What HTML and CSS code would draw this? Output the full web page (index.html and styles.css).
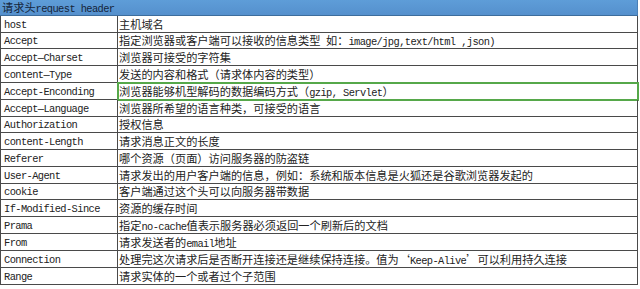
FILE: index.html
```html
<!DOCTYPE html>
<html lang="zh-CN">
<head>
<meta charset="utf-8">
<title>请求头request header</title>
<link rel="stylesheet" href="styles.css">
</head>
<body>
<div class="sheet">
  <div class="head">请求头<span class="en">request header</span></div>
  <div class="row"><div class="k">host</div><div class="v">主机域名</div></div>
  <div class="row s"><div class="k">Accept</div><div class="v">指定浏览器或客户端可以接收的信息类型<span class="en"> </span>如：<span class="en">image/jpg,text/html ,json)</span></div></div>
  <div class="row"><div class="k">Accept—Charset</div><div class="v">浏览器可接受的字符集</div></div>
  <div class="row"><div class="k">content—Type</div><div class="v">发送的内容和格式（请求体内容的类型）</div></div>
  <div class="row"><div class="k">Accept-Enconding</div><div class="v hl">浏览器能够机型解码的数据编码方式（<span class="en">gzip, Servlet</span>）</div></div>
  <div class="row"><div class="k">Accept—Language</div><div class="v">浏览器所希望的语言种类，可接受的语言</div></div>
  <div class="row s"><div class="k">Authorization</div><div class="v">授权信息</div></div>
  <div class="row"><div class="k">content-Length</div><div class="v">请求消息正文的长度</div></div>
  <div class="row"><div class="k">Referer</div><div class="v">哪个资源（页面）访问服务器的防盗链</div></div>
  <div class="row"><div class="k">User-Agent</div><div class="v">请求发出的用户客户端的信息，例如：系统和版本信息是火狐还是谷歌浏览器发起的</div></div>
  <div class="row s"><div class="k">cookie</div><div class="v">客户端通过这个头可以向服务器带数据</div></div>
  <div class="row"><div class="k">If-Modified-Since</div><div class="v">资源的缓存时间</div></div>
  <div class="row"><div class="k">Prama</div><div class="v">指定<span class="en">no-cache</span>值表示服务器必须返回一个刷新后的文档</div></div>
  <div class="row"><div class="k">From</div><div class="v">请求发送者的<span class="en">email</span>地址</div></div>
  <div class="row"><div class="k">Connection</div><div class="v">处理完这次请求后是否断开连接还是继续保持连接。值为‘<span class="en">Keep-Alive</span>’可以利用持久连接</div></div>
  <div class="row"><div class="k">Range</div><div class="v">请求实体的一个或者过个子范围</div></div>
</div>
</body>
</html>
```

FILE: styles.css
```css
html, body {
  margin: 0;
  padding: 0;
  background: #ffffff;
}

.sheet {
  width: 638px;
  font-family: "Noto Sans CJK SC", sans-serif;
  font-size: 11.2px;
  color: #222222;
}

.en {
  font-family: "Liberation Mono", monospace;
  font-size: 10.4px;
  letter-spacing: -0.6px;
}

.head {
  height: 16px;
  box-sizing: border-box;
  background: linear-gradient(#5e9dd8, #5590cd);
  border-bottom: 1px solid #3d6d9c;
  border-right: 1px solid #4a7fb5;
  padding-left: 2px;
  line-height: 15px;
  color: #15253a;
  white-space: nowrap;
}

.row {
  display: grid;
  grid-template-columns: 118px 520px;
  height: 17px;
}

.row.s {
  height: 16px;
}

.k,
.v {
  box-sizing: border-box;
  border-bottom: 1px solid #4a4a4a;
  border-right: 1px solid #4a4a4a;
  line-height: 16px;
  white-space: nowrap;
  overflow: hidden;
}

.row.s .k,
.row.s .v {
  line-height: 15px;
}

.k {
  border-left: 1px solid #4a4a4a;
  padding-left: 3px;
  font-family: "Liberation Mono", monospace;
  font-size: 10.4px;
  letter-spacing: -0.6px;
  padding-top: 1px;
}

.v {
  padding-left: 1px;
}

.hl {
  outline: 2px solid #56a84a;
  outline-offset: -1px;
}
```
